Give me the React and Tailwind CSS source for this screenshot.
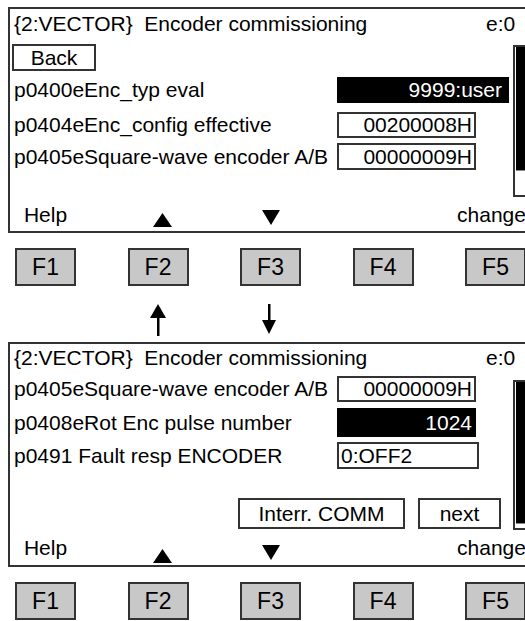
import React from "react";

function UpTri() {
  return (
    <svg width="19" height="14" viewBox="0 0 19 14" className="block">
      <polygon points="0,14 9.5,0 19,14" fill="#000" />
    </svg>
  );
}
function DownTri() {
  return (
    <svg width="18" height="15" viewBox="0 0 18 15" className="block">
      <polygon points="0,0 18,0 9,15" fill="#000" />
    </svg>
  );
}

function FKeys() {
  return (
    <div className="flex pl-[15px] gap-[51.5px]">
      {["F1", "F2", "F3", "F4", "F5"].map((k) => (
        <div
          key={k}
          className="w-[61px] h-[38px] shrink-0 border-2 border-[#333] bg-[#c8c8c8] flex items-center justify-center text-[23px] leading-[24px]"
        >
          {k}
        </div>
      ))}
    </div>
  );
}

function SoftRow({ upClass, downClass }) {
  return (
    <div className="flex pl-[5px] gap-[51.5px] text-[21px] leading-[24px]">
      <div className="w-[61px] shrink-0 flex justify-center pt-[3px]">Help</div>
      <div className={"w-[61px] shrink-0 flex justify-center pl-[8px] " + upClass}>
        <UpTri />
      </div>
      <div className={"w-[61px] shrink-0 flex justify-center " + downClass}>
        <DownTri />
      </div>
      <div className="w-[61px] shrink-0" />
      <div className="w-[61px] shrink-0 flex justify-center whitespace-nowrap pt-[3px] pr-[8px]">change</div>
    </div>
  );
}

function Scroll({ outerH, topGap, blackH }) {
  return (
    <div className={"w-[30px] border-2 border-[#333] px-[1px] " + outerH + " " + topGap}>
      <div className={"bg-black w-full border-b border-[#888] " + blackH} />
    </div>
  );
}

export default function App() {
  return (
    <div className="w-[525px] h-[621px] overflow-hidden bg-white text-black font-['Liberation_Sans',Arial,sans-serif]">
      {/* Panel 1 */}
      <div className="mt-[7px] ml-[8px] w-[540px] h-[226px] border-2 border-[#333] flex flex-col">
        <div className="h-[35px] flex items-start pt-[3px] pl-[4px] text-[21px] leading-[24px]">
          <span className="w-[472px] shrink-0 whitespace-pre">{"{2:VECTOR}  Encoder commissioning"}</span>
          <span>e:0</span>
        </div>
        <div className="h-[156px] flex">
          <div className="w-[503px] shrink-0 flex flex-col text-[21px] leading-[24px]">
            <div className="ml-[2px] w-[84px] h-[27px] border-2 border-[#333] flex items-center justify-center">
              Back
            </div>
            <div className="mt-[6px] h-[26px] flex items-center">
              <span className="w-[327px] shrink-0 pl-[4px]">p0400eEnc_typ eval</span>
              <div className="w-[172px] h-[26px] bg-black text-white flex items-center justify-end pr-[7px]">
                9999:user
              </div>
            </div>
            <div className="mt-[9px] h-[26px] flex items-center">
              <span className="w-[327px] shrink-0 pl-[4px]">p0404eEnc_config effective</span>
              <div className="w-[139px] h-[26px] border-2 border-[#333] flex items-center justify-end pr-[2px]">
                00200008H
              </div>
            </div>
            <div className="mt-[5px] h-[27px] flex items-center">
              <span className="w-[327px] shrink-0 pl-[4px] whitespace-nowrap">p0405eSquare-wave encoder A/B</span>
              <div className="w-[139px] h-[27px] border-2 border-[#333] flex items-center justify-end pr-[2px]">
                00000009H
              </div>
            </div>
          </div>
          <Scroll outerH="h-[152px]" topGap="mt-[1px]" blackH="h-[124px]" />
        </div>
        <SoftRow upClass="pt-[13px]" downClass="pt-[10px]" />
      </div>

      <div className="mt-[15px]">
        <FKeys />
      </div>

      {/* Arrows */}
      <div className="mt-[18px] h-[32px] flex pl-[15px] gap-[51.5px]">
        <div className="w-[61px] shrink-0" />
        <div className="w-[61px] shrink-0 flex justify-center">
          <svg width="18" height="32" viewBox="0 0 18 32" className="block">
            <polygon points="1,14 9,0 17,14" fill="#000" />
            <rect x="8" y="12" width="2.5" height="20" fill="#000" />
          </svg>
        </div>
        <div className="w-[61px] shrink-0 flex justify-center pr-[4px]">
          <svg width="16" height="30" viewBox="0 0 16 30" className="block">
            <rect x="7" y="0" width="2.5" height="18" fill="#000" />
            <polygon points="1,16 15,16 8,30" fill="#000" />
          </svg>
        </div>
      </div>

      {/* Panel 2 */}
      <div className="mt-[6px] ml-[8px] w-[540px] h-[225px] border-2 border-[#333] flex flex-col">
        <div className="h-[32px] flex items-start pt-[2px] pl-[4px] text-[21px] leading-[24px]">
          <span className="w-[472px] shrink-0 whitespace-pre">{"{2:VECTOR}  Encoder commissioning"}</span>
          <span>e:0</span>
        </div>
        <div className="h-[157px] flex">
          <div className="w-[503px] shrink-0 flex flex-col text-[21px] leading-[24px]">
            <div className="h-[26px] flex items-center">
              <span className="w-[327px] shrink-0 pl-[4px] whitespace-nowrap">p0405eSquare-wave encoder A/B</span>
              <div className="w-[139px] h-[26px] border-2 border-[#333] flex items-center justify-end pr-[2px]">
                00000009H
              </div>
            </div>
            <div className="mt-[6px] h-[29px] flex items-center">
              <span className="w-[327px] shrink-0 pl-[4px]">p0408eRot Enc pulse number</span>
              <div className="w-[139px] h-[29px] bg-black text-white flex items-center justify-end pr-[4px]">
                1024
              </div>
            </div>
            <div className="mt-[5px] h-[27px] flex items-center">
              <span className="w-[327px] shrink-0 pl-[4px]">p0491 Fault resp ENCODER</span>
              <div className="w-[142px] h-[27px] border-2 border-[#333] flex items-center pl-[2px]">
                0:OFF2
              </div>
            </div>
            <div className="mt-[29px] h-[31px] flex">
              <div className="ml-[228px] w-[167px] h-[31px] border-2 border-[#333] flex items-center justify-center">
                Interr. COMM
              </div>
              <div className="ml-[13px] w-[83px] h-[31px] border-2 border-[#333] flex items-center justify-center">
                next
              </div>
            </div>
          </div>
          <Scroll outerH="h-[150px]" topGap="mt-[4px]" blackH="h-[142px]" />
        </div>
        <SoftRow upClass="pt-[16px]" downClass="pt-[12px]" />
      </div>

      <div className="mt-[15px]">
        <FKeys />
      </div>
    </div>
  );
}
